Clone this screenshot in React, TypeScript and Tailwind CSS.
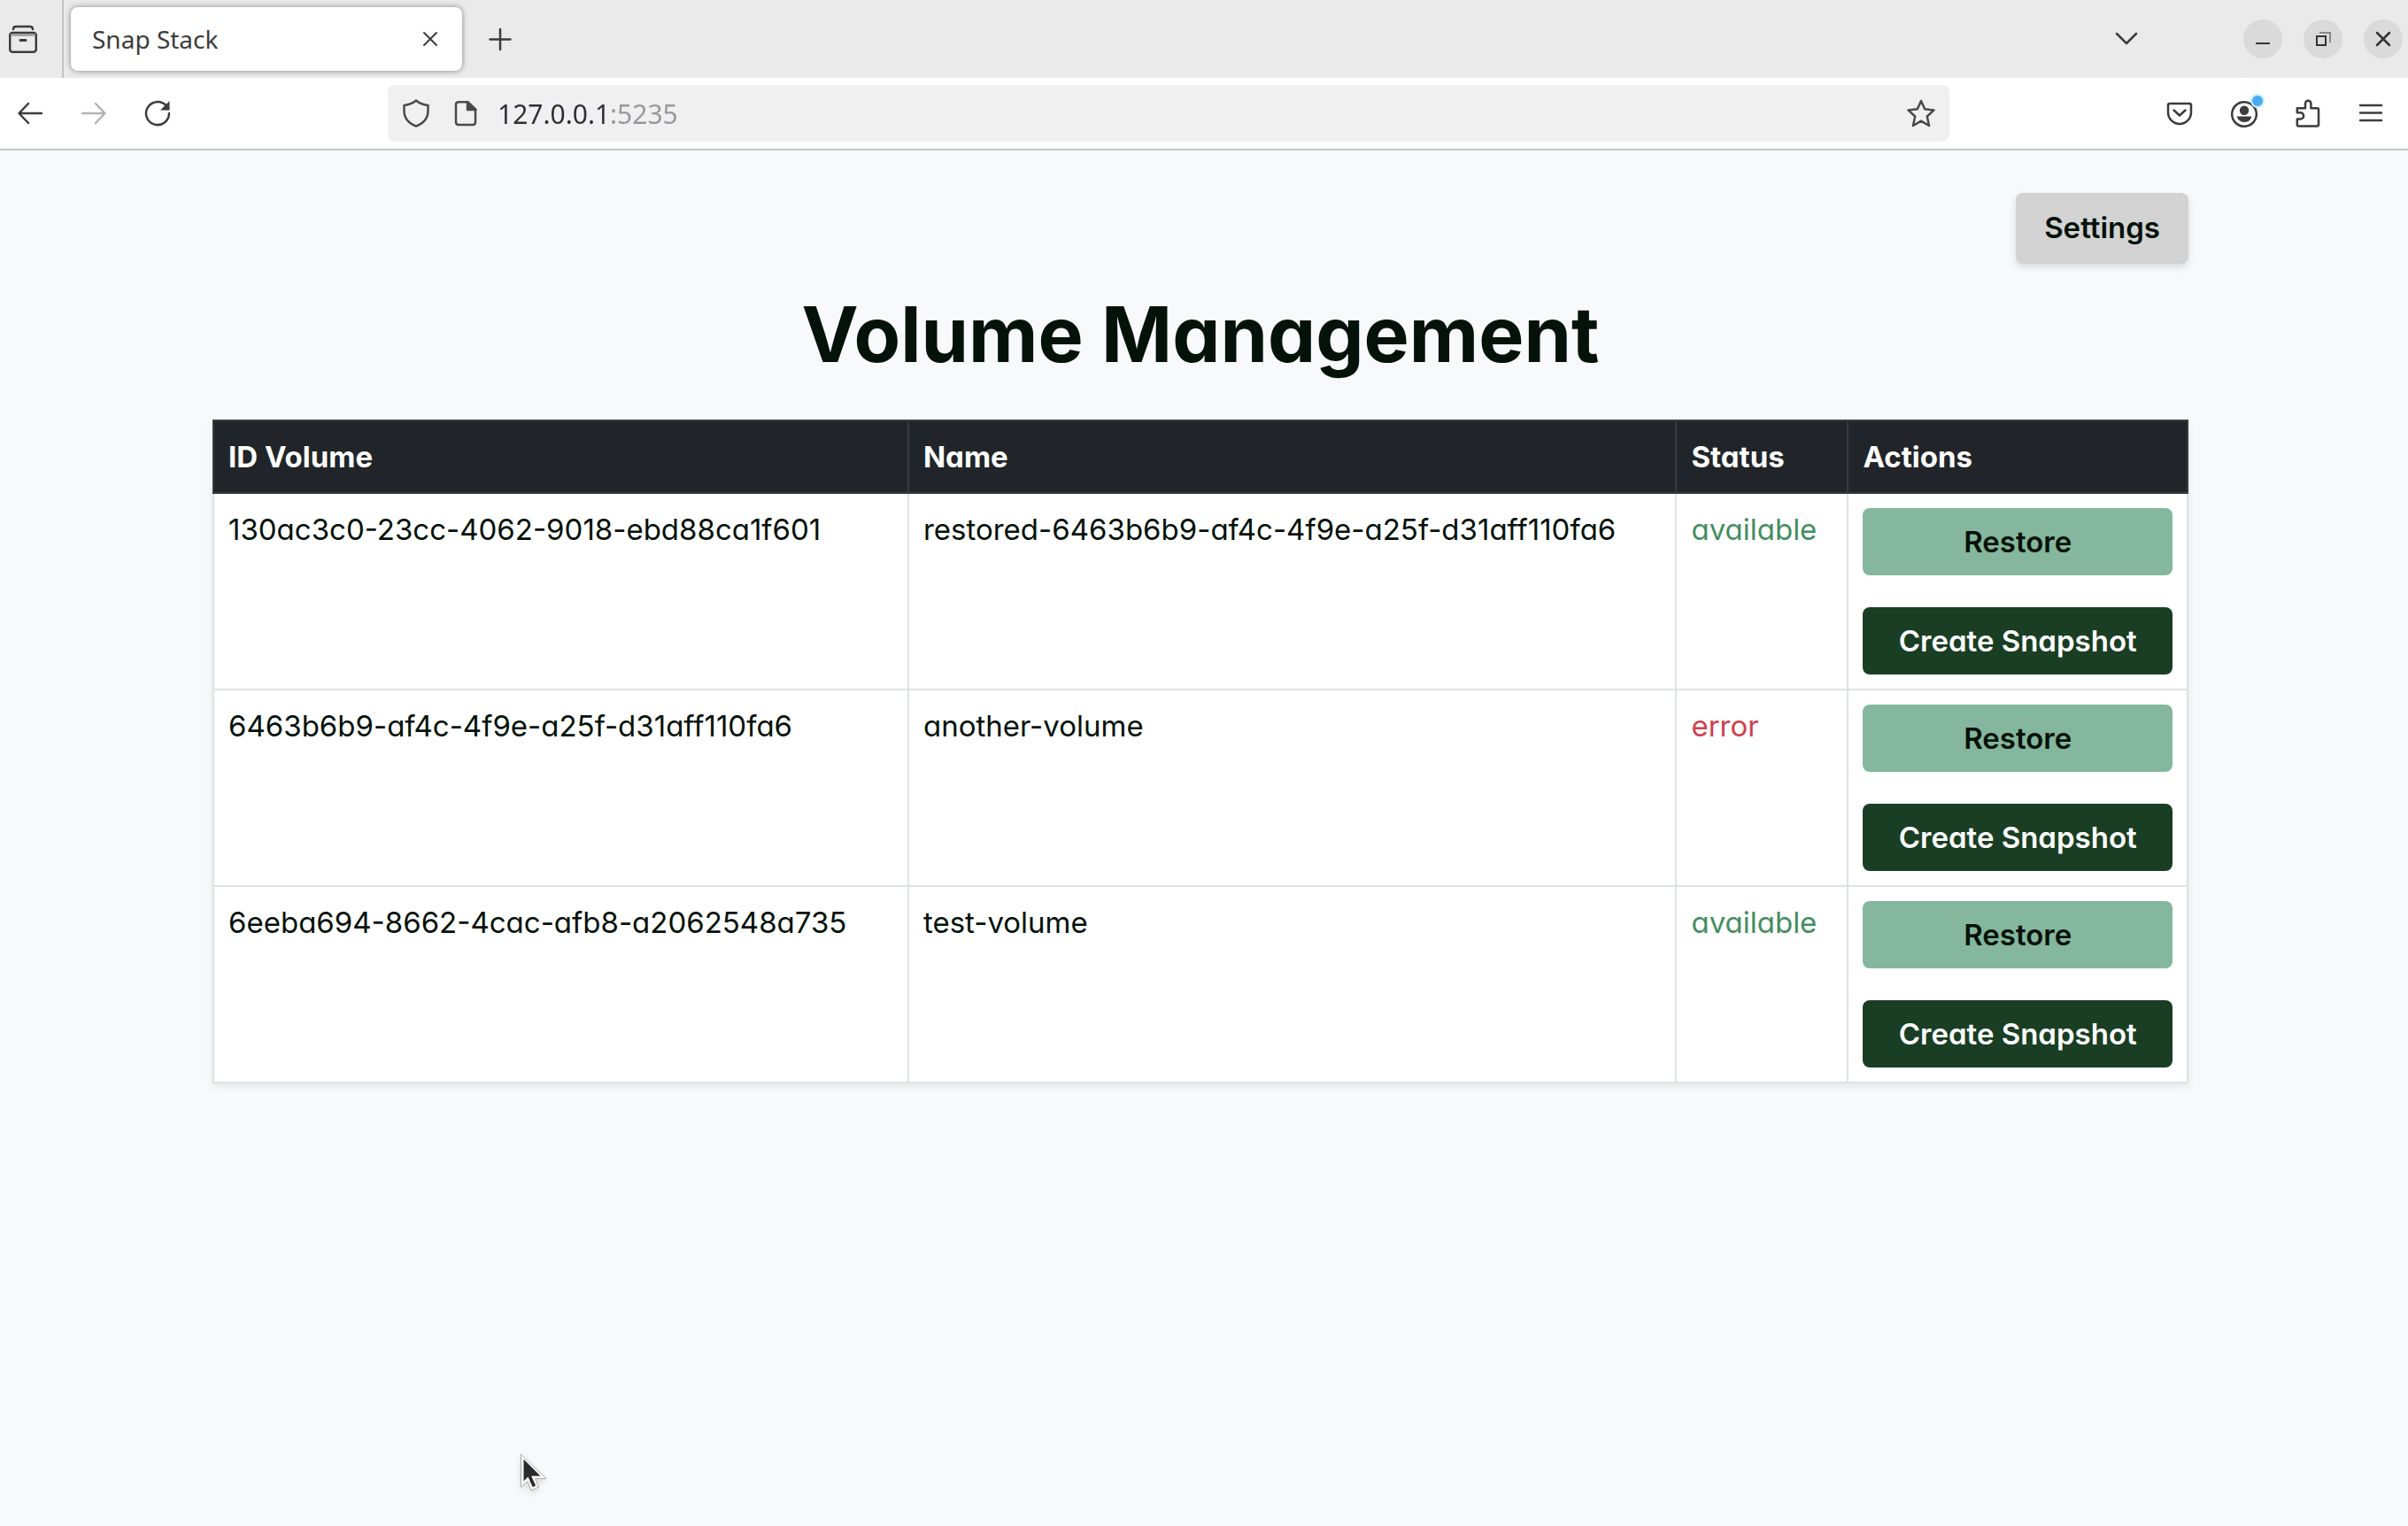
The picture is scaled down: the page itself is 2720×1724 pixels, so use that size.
import type { ReactNode } from "react";

type Volume = { id: string; name: string; status: "available" | "error" };

const volumes: Volume[] = [
  { id: "130ac3c0-23cc-4062-9018-ebd88ca1f601", name: "restored-6463b6b9-af4c-4f9e-a25f-d31aff110fa6", status: "available" },
  { id: "6463b6b9-af4c-4f9e-a25f-d31aff110fa6", name: "another-volume", status: "error" },
  { id: "6eeba694-8662-4cac-afb8-a2062548a735", name: "test-volume", status: "available" },
];

function Icon({ children, className = "" }: { children: ReactNode; className?: string }) {
  return (
    <svg
      viewBox="0 0 32 32"
      fill="none"
      stroke="currentColor"
      strokeWidth="2.5"
      strokeLinecap="round"
      strokeLinejoin="round"
      aria-hidden="true"
      className={`size-8 shrink-0 ${className}`}
    >
      {children}
    </svg>
  );
}

function ToolButton({ label, children }: { label: string; children: ReactNode }) {
  return (
    <button type="button" aria-label={label} className="relative flex h-16 w-16 items-center justify-center rounded-lg">
      {children}
    </button>
  );
}

function WindowButton({ label, children }: { label: string; children: ReactNode }) {
  return (
    <button type="button" aria-label={label} className="flex size-11 items-center justify-center rounded-full bg-[#dadada] text-[#333333]">
      {children}
    </button>
  );
}

function TabStrip() {
  return (
    <div className="flex h-22 items-center bg-[#eaeaea] pr-1.5 text-[#3c3c3c]">
      <div className="flex h-full w-18 items-center border-r-2 border-[#c2c2c2] pl-2.5">
        <button type="button" aria-label="Recent browsing">
          <Icon>
            <path d="M5 5 Q5 2 8 2 H24 Q27 2 27 5" />
            <rect x="1.2" y="9" width="29.6" height="21.8" rx="3" />
            <path d="M2 11.5H30" stroke="#9a9a9a" strokeLinecap="butt" />
            <path d="M13 17.5H19" strokeWidth="3" />
          </Icon>
        </button>
      </div>
      <div className="ml-2 flex h-18 w-[442px] items-center justify-between rounded-lg bg-white pr-5 pl-6 shadow-[0_0_6px_rgba(0,0,0,0.45)]">
        <span className="font-['Noto_Sans',sans-serif] text-[28px] leading-9">Snap Stack</span>
        <button type="button" aria-label="Close tab">
          <Icon>
            <path d="M9 9 23 23M23 9 9 23" strokeWidth="2" />
          </Icon>
        </button>
      </div>
      <button type="button" aria-label="New tab" className="ml-[27px]">
        <Icon>
          <path d="M16 5V28M4.500 16.500H27.500" />
        </Icon>
      </button>
      <button type="button" aria-label="List all tabs" className="ml-auto flex w-11 justify-center">
        <Icon>
          <path d="M5 10 16 21 27 10" />
        </Icon>
      </button>
      <div className="ml-[110px] flex gap-6">
        <WindowButton label="Minimize">
          <Icon>
            <path d="M8 21H24" strokeWidth="2" strokeLinecap="butt" />
          </Icon>
        </WindowButton>
        <WindowButton label="Restore window">
          <Icon>
            <path d="M12 9H24V20" stroke="#888888" strokeWidth="2" strokeLinecap="butt" strokeLinejoin="miter" />
            <rect x="9" y="13" width="10" height="10" strokeWidth="2" strokeLinejoin="miter" />
          </Icon>
        </WindowButton>
        <WindowButton label="Close window">
          <Icon>
            <path d="M9 9 23 23M23 9 9 23" />
          </Icon>
        </WindowButton>
      </div>
    </div>
  );
}

function Toolbar() {
  return (
    <div className="flex h-[82px] items-center border-b-2 border-[#c6c6c6] bg-white pr-2.5 pl-0.5 text-[#3c3c3c]">
      <div className="flex gap-2">
        <ToolButton label="Back">
          <Icon>
            <path d="M29 16H4M14 5 3.500 16 14 27" />
          </Icon>
        </ToolButton>
        <ToolButton label="Forward">
          <Icon className="text-[#b4b4b4]">
            <path d="M3 16H28M18 5 28.500 16 18 27" />
          </Icon>
        </ToolButton>
        <ToolButton label="Reload">
          <Icon>
            <path d="M29 16A13 13 0 1 1 25.500 7.200" />
            <path d="M29.500 2V12.500H19Z" fill="currentColor" stroke="none" />
          </Icon>
        </ToolButton>
      </div>
      <div className="mx-[228px] flex h-16 flex-1 items-center rounded-lg bg-[#f0f0f0] px-4 text-[#4a4a4a]">
        <Icon>
          <path d="M16 1.500C12 5 7 6.500 2.500 7V13C2.500 22 8 27.500 16 30.500C24 27.500 29.500 22 29.500 13V7C25 6.500 20 5 16 1.500Z" />
        </Icon>
        <Icon className="ml-6">
          <path d="M8 3.200H18L27 12V26Q27 29 24 29H8Q5 29 5 26V6Q5 3.200 8 3.200Z" />
          <path d="M18 3V12H27.500Z" fill="currentColor" />
        </Icon>
        <input
          aria-label="Address"
          defaultValue="127.0.0.1:5235"
          className="mx-5 h-12 min-w-0 flex-1 bg-[linear-gradient(to_right,#2e2e38_127px,#97979c_127px)] bg-clip-text font-['Noto_Sans',sans-serif] text-[30px] text-transparent outline-none"
        />
        <button type="button" aria-label="Bookmark this page">
          <Icon>
            <path d="M16 2 20.200 11.200 30.500 12.400 22.800 19.500 25 30 16 24.700 7 30 9.200 19.500 1.500 12.400 11.800 11.200Z" />
          </Icon>
        </button>
      </div>
      <div className="flex gap-2">
        <ToolButton label="Save to Pocket">
          <Icon>
            <path d="M5 5H27Q29 5 29 7V15A13 13 0 0 1 3 15V7Q3 5 5 5Z" />
            <path d="M9.500 12.500 16 18.500 22.500 12.500" />
          </Icon>
        </ToolButton>
        <ToolButton label="Account">
          <Icon>
            <circle cx="17" cy="17" r="13.8" />
            <circle cx="17" cy="12.800" r="5.200" fill="currentColor" stroke="none" />
            <path d="M8.500 19.500H25.500Q23.500 26 17 26T8.500 19.500Z" fill="currentColor" stroke="none" />
          </Icon>
          <span className="absolute top-3 right-2.5 size-3 rounded-full bg-[#4aaaf0] ring-2 ring-[#c8f0fb]" />
        </ToolButton>
        <ToolButton label="Extensions">
          <Icon>
            <path d="M5 10.200H14V5A3.200 3.200 0 0 1 20.400 5V10.200H27.500Q29 10.200 29 11.700V28.500Q29 30.500 27 30.500H6.500Q4.800 30.500 4.800 28.800V22.500H8.500A3.600 3.600 0 0 0 8.500 15.300H4.800V10.200Z" />
          </Icon>
        </ToolButton>
        <ToolButton label="Application menu">
          <Icon>
            <path d="M4 7H28M4 15.500H28M4 24H28" />
          </Icon>
        </ToolButton>
      </div>
    </div>
  );
}

function VolumeTable() {
  return (
    <table className="w-full table-fixed border-collapse bg-white text-left text-[33px] leading-12 shadow-[0_4px_8px_rgba(0,0,0,0.08)]">
      <colgroup>
        <col className="w-[35.2%]" />
        <col className="w-[38.9%]" />
        <col className="w-[8.7%]" />
        <col className="w-[17.2%]" />
      </colgroup>
      <thead className="bg-[#212529] text-white">
        <tr>
          {["ID Volume", "Name", "Status", "Actions"].map((title) => (
            <th key={title} scope="col" className="border-2 border-[#373b3e] p-4 font-bold">
              {title}
            </th>
          ))}
        </tr>
      </thead>
      <tbody>
        {volumes.map((volume) => (
          <tr key={volume.id} className="align-top">
            <td className="border-2 border-[#dee2e6] p-4">{volume.id}</td>
            <td className="border-2 border-[#dee2e6] p-4">{volume.name}</td>
            <td className={`border-2 border-[#dee2e6] p-4 ${volume.status === "error" ? "text-[#d04050]" : "text-[#438e60]"}`}>
              {volume.status}
            </td>
            <td className="border-2 border-[#dee2e6] p-4">
              <div className="flex flex-col gap-9">
                <button type="button" className="h-19 rounded-lg bg-[#84b79d] font-semibold">
                  Restore
                </button>
                <button type="button" className="h-19 rounded-lg bg-[#193e23] font-semibold text-white">
                  Create Snapshot
                </button>
              </div>
            </td>
          </tr>
        ))}
      </tbody>
    </table>
  );
}

function Pointer() {
  return (
    <svg viewBox="0 0 32 44" aria-hidden="true" className="pointer-events-none absolute top-[1642px] left-[587px] h-11 w-8 drop-shadow-md">
      <path d="M3 3V35L9 29L14 40L20 37L15.500 27H27Z" fill="#2b2b2b" stroke="#ffffff" strokeWidth="3" />
      <path d="M1.500 1V38L9 31.500L13 42L21.500 38L17.500 28.500H30Z" stroke="#a8a8a8" strokeWidth="1" fill="none" />
    </svg>
  );
}

export default function App() {
  return (
    <div className="relative flex min-h-screen flex-col bg-[#f8f9fb]">
      <header>
        <TabStrip />
        <Toolbar />
      </header>
      <main className="flex flex-col pt-12 pr-[248px] pl-60 font-[Inter,sans-serif] text-[#04120a] [font-feature-settings:'cv11']">
        <button type="button" className="h-20 self-end rounded-lg bg-[#d3d3d3] px-8 text-[33px] font-semibold shadow-[0_4px_8px_rgba(0,0,0,0.12)]">
          Settings
        </button>
        <h1 className="mt-8 mb-12 text-center text-[86px] leading-24 font-bold">Volume Management</h1>
        <VolumeTable />
      </main>
      <Pointer />
    </div>
  );
}
